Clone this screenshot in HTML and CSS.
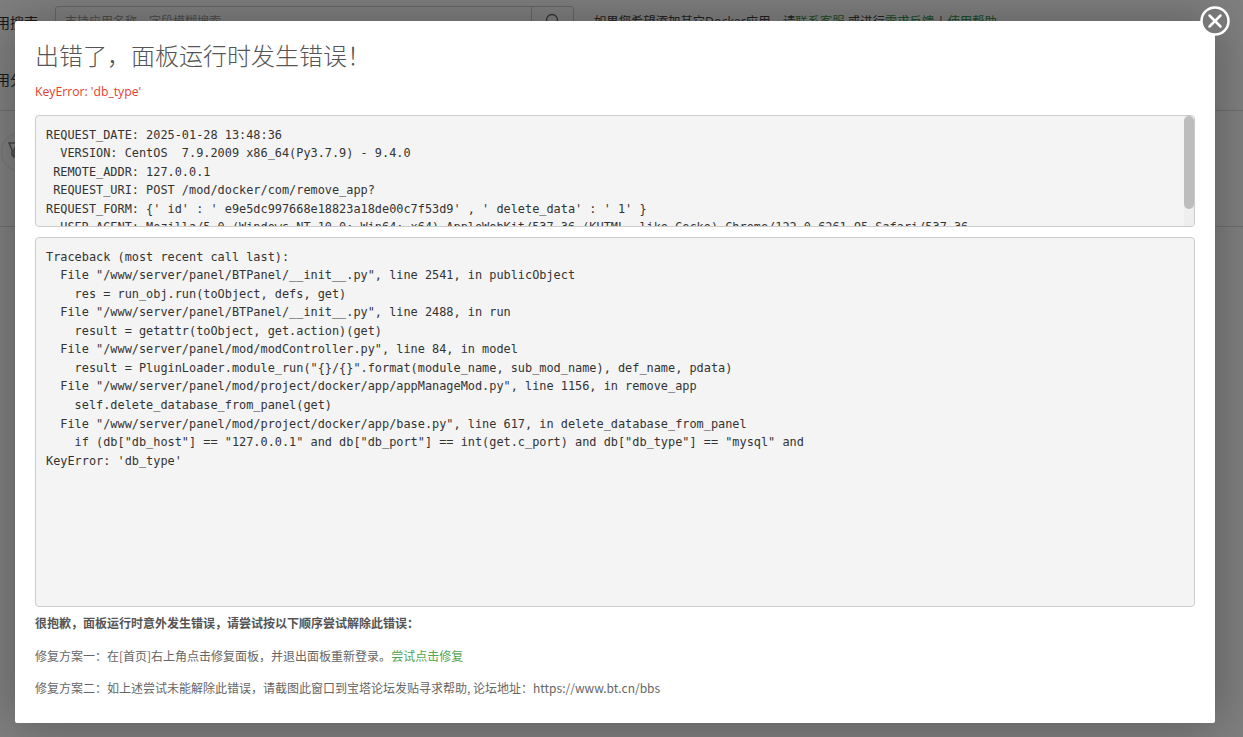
FILE: index.html
```
<!DOCTYPE html>
<html lang="zh-CN">
<head>
<meta charset="utf-8">
<title>出错了，面板运行时发生错误！</title>
<link rel="stylesheet" href="styles.css">
</head>
<body>
<main class="page">
  <div class="toolbar">
    <span class="toolbar-label">应用搜索</span>
    <div class="search">
      <span class="search-text">支持应用名称、字段模糊搜索</span>
      <span class="search-btn">
        <svg class="search-icon" viewBox="0 0 16 16" width="16" height="16"><circle cx="7" cy="7" r="5.5"/><path d="M11 11l4 4"/></svg>
      </span>
    </div>
    <span class="toolbar-note">如果您希望添加其它Docker应用，请<a class="link">联系客服</a> 或进行<a class="link">需求反馈</a> | <a class="link">使用帮助</a></span>
  </div>
  <div class="category"><span class="toolbar-label">应用分类</span></div>
  <div class="app-row">
    <span class="app-logo">
      <svg class="app-glyph" viewBox="0 0 10 16" width="10" height="16"><path d="M1 1h8L6 8v7L4 13V8z"/></svg>
    </span>
  </div>
</main>
<div class="overlay"></div>
<section class="modal">
  <h1 class="modal-title">出错了，面板运行时发生错误！</h1>
  <p class="modal-error">KeyError: 'db_type'</p>
  <div class="code-wrap">
    <pre class="code code-request">REQUEST_DATE: 2025-01-28 13:48:36
  VERSION: CentOS  7.9.2009 x86_64(Py3.7.9) - 9.4.0
 REMOTE_ADDR: 127.0.0.1
 REQUEST_URI: POST /mod/docker/com/remove_app?
REQUEST_FORM: {&#x27; id&#x27; : &#x27; e9e5dc997668e18823a18de00c7f53d9&#x27; , &#x27; delete_data&#x27; : &#x27; 1&#x27; }
  USER_AGENT: Mozilla/5.0 (Windows NT 10.0; Win64; x64) AppleWebKit/537.36 (KHTML, like Gecko) Chrome/122.0.6261.95 Safari/537.36</pre>
    <div class="scrollbar"><div class="scrollbar-thumb"></div></div>
  </div>
  <pre class="code code-trace">Traceback (most recent call last):
  File "/www/server/panel/BTPanel/__init__.py", line 2541, in publicObject
    res = run_obj.run(toObject, defs, get)
  File "/www/server/panel/BTPanel/__init__.py", line 2488, in run
    result = getattr(toObject, get.action)(get)
  File "/www/server/panel/mod/modController.py", line 84, in model
    result = PluginLoader.module_run("{}/{}".format(module_name, sub_mod_name), def_name, pdata)
  File "/www/server/panel/mod/project/docker/app/appManageMod.py", line 1156, in remove_app
    self.delete_database_from_panel(get)
  File "/www/server/panel/mod/project/docker/app/base.py", line 617, in delete_database_from_panel
    if (db["db_host"] == "127.0.0.1" and db["db_port"] == int(get.c_port) and db["db_type"] == "mysql" and
KeyError: 'db_type'</pre>
  <p class="help help-lead">很抱歉，面板运行时意外发生错误，请尝试按以下顺序尝试解除此错误：</p>
  <p class="help">修复方案一：在[首页]右上角点击修复面板，并退出面板重新登录。<a class="help-link">尝试点击修复</a></p>
  <p class="help">修复方案二：如上述尝试未能解除此错误，请截图此窗口到宝塔论坛发贴寻求帮助, 论坛地址：https://www.bt.cn/bbs</p>
  <button class="close" type="button" aria-label="关闭">
    <svg viewBox="0 0 30 30" width="30" height="30"><circle class="close-disc" cx="15" cy="15" r="13.5"/><path class="close-x" d="M9.500 9.500l11 11M20.500 9.500l-11 11"/></svg>
  </button>
</section>
</body>
</html>
```
FILE: styles.css
```
* { box-sizing: border-box; }
html, body { margin: 0; height: 100%; }
body {
  background: #fff;
  color: #555;
  font-family: "Open Sans", "Noto Sans CJK SC", sans-serif;
  font-size: 12px;
  overflow: hidden;
}
.page { padding: 5px 0 0; color: #333; font-size: 14px; font-family: "Open Sans", "Noto Sans CJK SC", sans-serif; }
.toolbar { display: flex; align-items: center; height: 32px; margin-left: -18px; gap: 17px; }
.toolbar-label { position: relative; top: 1px; }
.search { display: flex; width: 519px; height: 30px; border: 1px solid #ccc; border-radius: 3px; color: #999; font-size: 12px; align-items: center; justify-content: space-between; padding-left: 9px; }
.search-btn { display: flex; align-items: center; justify-content: center; width: 42px; height: 100%; border-left: 1px solid #ccc; }
.search-icon { fill: none; stroke: #666; stroke-width: 1.3; }
.toolbar-note { margin-left: 3px; font-size: 12.350px; color: #444; }
.link { color: #3a9a4a; }
.category { height: 74px; margin-left: -18px; padding-top: 31px; border-bottom: 1px solid #ddd; }
.app-row { height: 116px; padding: 21px 0 0 1px; border-bottom: 1px solid #ddd; }
.app-logo { display: flex; align-items: center; justify-content: center; width: 40px; height: 40px; border-radius: 50%; border: 1px solid #e5e5e5; }
.app-glyph { margin-right: 16px; margin-bottom: 4px; fill: none; stroke: #888; stroke-width: 1.5; }
.overlay { position: absolute; inset: 0; background: rgba(0, 0, 0, .5); }
.modal {
  position: absolute;
  left: 15px;
  top: 21px;
  width: 1200px;
  height: 702px;
  padding: 20px;
  background: #fff;
  border-radius: 2px;
  box-shadow: 1px 1px 50px rgba(0, 0, 0, .3);
}
.modal-title { margin: 0; height: 28px; font-size: 24px; line-height: 28px; font-weight: 300; color: #555; font-family: "Noto Sans CJK SC", sans-serif; }
.modal-error { margin: 14px 0 0; height: 17px; line-height: 17px; font-size: 12.200px; color: #e53e2e; }
.code-wrap { position: relative; margin-top: 15px; margin-bottom: 10px; }
.code {
  margin: 0;
  padding: 9.500px 10px;
  background: #f4f4f4;
  border: 1px solid #ccc;
  border-radius: 4px;
  color: #333;
  font-family: "DejaVu Sans Mono", monospace;
  font-size: 11.880px;
  line-height: 18.570px;
  white-space: pre;
}
.code-request { height: 112px; overflow: hidden; }
.scrollbar { position: absolute; top: 1px; right: 1px; bottom: 1px; width: 10px; background: #eee; border-radius: 0 3px 3px 0; }
.scrollbar-thumb { height: 93px; background: #bdbdbd; border-radius: 5px; }
.code-trace { height: 370px; overflow: hidden; }
.help { margin: 0 0 15.500px; height: 17px; line-height: 17px; color: #666; font-family: "Noto Sans CJK SC", sans-serif; }
.help-lead { margin-top: 7px; font-weight: 700; color: #555; }
.help-link { color: #52a552; }
.close { position: absolute; top: -15px; right: -15px; width: 30px; height: 30px; padding: 0; border: 0; background: none; }
.close svg { display: block; }
.close-disc { fill: #777; stroke: #fff; stroke-width: 2.500; }
.close-x { fill: none; stroke: #fff; stroke-width: 2.500; stroke-linecap: round; }
```
